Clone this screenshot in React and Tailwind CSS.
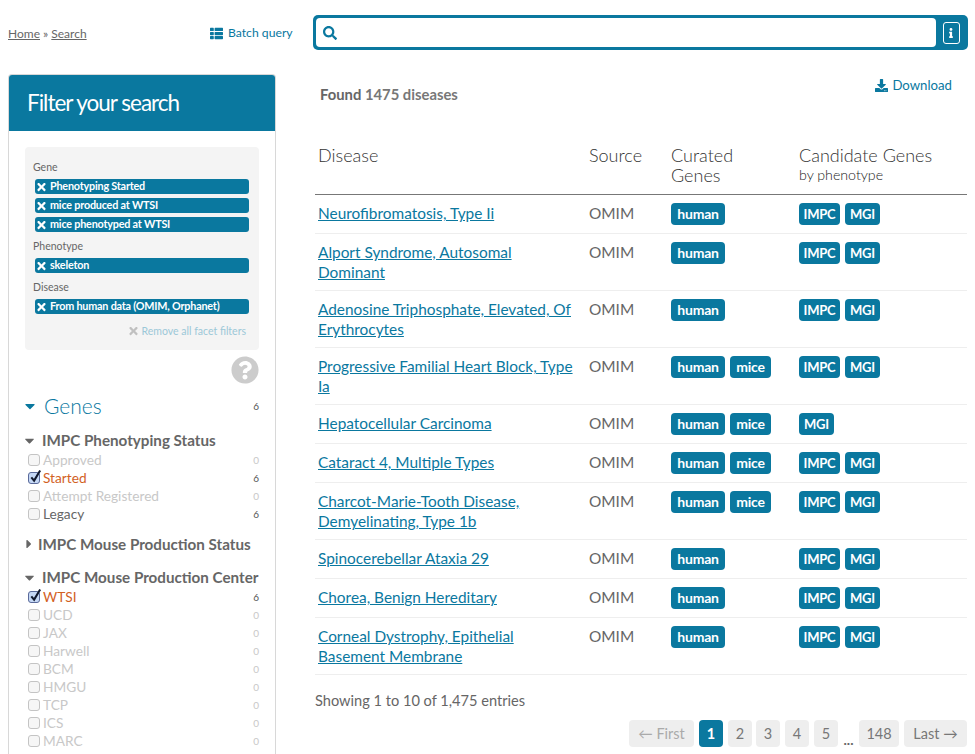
import { FaThList, FaSearch, FaInfo, FaDownload, FaTimes, FaQuestionCircle, FaCaretDown, FaCaretRight } from 'react-icons/fa';

const rows = [
  { name: ['Neurofibromatosis, Type Ii'], curated: ['human'], candidate: ['IMPC', 'MGI'] },
  { name: ['Alport Syndrome, Autosomal', 'Dominant'], curated: ['human'], candidate: ['IMPC', 'MGI'] },
  { name: ['Adenosine Triphosphate, Elevated, Of', 'Erythrocytes'], curated: ['human'], candidate: ['IMPC', 'MGI'] },
  { name: ['Progressive Familial Heart Block, Type', 'Ia'], curated: ['human', 'mice'], candidate: ['IMPC', 'MGI'] },
  { name: ['Hepatocellular Carcinoma'], curated: ['human', 'mice'], candidate: ['MGI'] },
  { name: ['Cataract 4, Multiple Types'], curated: ['human', 'mice'], candidate: ['IMPC', 'MGI'] },
  { name: ['Charcot-Marie-Tooth Disease,', 'Demyelinating, Type 1b'], curated: ['human', 'mice'], candidate: ['IMPC', 'MGI'] },
  { name: ['Spinocerebellar Ataxia 29'], curated: ['human'], candidate: ['IMPC', 'MGI'] },
  { name: ['Chorea, Benign Hereditary'], curated: ['human'], candidate: ['IMPC', 'MGI'] },
  { name: ['Corneal Dystrophy, Epithelial', 'Basement Membrane'], curated: ['human'], candidate: ['IMPC', 'MGI'] },
];

const badgeWidths = {
  human: 'w-[54px] text-[14px]',
  mice: 'w-[41px] text-[14px]',
  IMPC: 'w-[41px] text-[13px]',
  MGI: 'w-[35px] text-[13px]',
};

const Badge = ({ children }) => (
  <span className={`inline-flex h-[22px] items-center justify-center rounded-[4px] bg-[#0a789f] font-bold leading-none tracking-[-0.2px] text-white ${badgeWidths[children]}`}>
    {children}
  </span>
);

const Chip = ({ children }) => (
  <div className="flex h-[15px] items-center rounded-[3px] bg-[#0a789f] pl-[2px] text-[10.8px] font-bold leading-none tracking-[-0.2px] text-white">
    <FaTimes className="mr-[4px] h-[12px] w-[9px]" />
    {children}
  </div>
);

const Check = ({ checked }) => (
  <span className={`relative mr-[3px] block h-[12px] w-[12px] shrink-0 rounded-[3px] border ${checked ? 'border-[#5a6a9a] bg-[#c5d8f5]' : 'border-[#c4c4c4] bg-[#f6f6f6]'}`}>
    {checked && (
      <svg viewBox="0 0 14 16" className="absolute left-0 top-[-5px] h-[16px] w-[13px]">
        <path d="M2.5 9.5 L5.5 13 L12 2" fill="none" stroke="#10182c" strokeWidth="2.2" />
      </svg>
    )}
  </span>
);

const Facet = ({ label, count, checked }) => (
  <div className="flex h-[18px] items-center pl-[3px] text-[13.7px]">
    <Check checked={checked} />
    <span className={checked ? 'text-[#d2611f]' : count > 0 ? 'text-[#666666]' : 'text-[#c8c8c8]'}>{label}</span>
    <span className={`ml-auto text-[10px] ${count > 0 ? 'text-[#555555]' : 'text-[#c8c8c8]'}`}>{count}</span>
  </div>
);

const PageBtn = ({ children, className = 'w-[24px]' }) => (
  <span className={`flex h-[27px] items-center justify-center rounded-[4px] bg-[#eeeeee] text-[14.5px] text-[#777777] ${className}`}>
    {children}
  </span>
);

export default function App() {
  return (
    <div className="h-screen w-full overflow-hidden bg-white text-[#666666]" style={{ fontFamily: 'Lato, "Open Sans", sans-serif' }}>
      <div className="flex items-center pl-[8px] pr-[7px] pt-[15px]">
        <div className="w-[202px] pt-[2px] text-[12px] text-[#666666]">
          <a className="underline">Home</a> » <a className="underline">Search</a>
        </div>
        <div className="flex w-[103px] items-center pt-[2px] text-[12.2px] text-[#0a789f]">
          <FaThList className="mr-[5px] h-[13px] w-[13px]" />
          Batch query
        </div>
        <div className="flex h-[35px] flex-1 items-stretch rounded-[5px] bg-[#0a789f] p-[3px]">
          <div className="flex flex-1 items-center rounded-[4px] bg-white pl-[7px]">
            <FaSearch className="h-[14px] w-[14px] text-[#0a789f]" />
          </div>
          <div className="flex w-[29px] items-center justify-center pl-[1px]">
            <span className="flex h-[22px] w-[17px] items-center justify-center rounded-[3px] border border-white">
              <FaInfo className="h-[10px] w-[10px] text-white" />
            </span>
          </div>
        </div>
      </div>

      <div className="mt-[24px] flex">
        <aside className="ml-[8px] w-[268px] shrink-0 rounded-t-[4px] border-x border-t border-[#d8d8d8] pb-[40px]">
          <div className="flex h-[56px] items-center rounded-t-[3px] bg-[#0a789f] pl-[18px] text-[22.5px] tracking-[-1px] text-white">
            Filter your search
          </div>
          <div className="px-[16px] pt-[16px]">
            <div className="rounded-[4px] bg-[#f4f4f4] px-[10px] pb-[12px] pt-[13px]">
              <div className="-ml-[2px] mb-[5px] text-[10.5px] leading-[14px] text-[#666666]">Gene</div>
              <div className="flex flex-col gap-[4px]">
                <Chip>Phenotyping Started</Chip>
                <Chip>mice produced at WTSI</Chip>
                <Chip>mice phenotyped at WTSI</Chip>
              </div>
              <div className="-ml-[2px] mb-[5px] mt-[7px] text-[10.5px] leading-[14px] text-[#666666]">Phenotype</div>
              <Chip>skeleton</Chip>
              <div className="-ml-[2px] mb-[5px] mt-[7px] text-[10.5px] leading-[14px] text-[#666666]">Disease</div>
              <Chip>From human data (OMIM, Orphanet)</Chip>
              <div className="mt-[10px] flex items-center justify-end pr-[3px] text-[10.5px] leading-[14px] text-[#9cc8d8]">
                <FaTimes className="mr-[4px] h-[12px] w-[9px] text-[#c0c0c0]" />
                Remove all facet filters
              </div>
            </div>
            <div className="mt-[6px] flex justify-end">
              <FaQuestionCircle className="h-[28px] w-[28px] text-[#cccccc]" />
            </div>
            <div className="mt-[7px] flex h-[30px] items-center">
              <FaCaretDown className="ml-[-3px] h-[16px] w-[16px] text-[#0a789f]" />
              <span className="ml-[6px] text-[21px] font-light text-[#0a789f]">Genes</span>
              <span className="ml-auto text-[10px] text-[#555555]">6</span>
            </div>
            <div className="mt-[8px] flex h-[22px] items-center text-[15.2px] font-bold text-[#666666]">
              <FaCaretDown className="ml-[-3px] mr-[5px] h-[15px] w-[15px]" />
              IMPC Phenotyping Status
            </div>
            <Facet label="Approved" count={0} />
            <Facet label="Started" count={6} checked />
            <Facet label="Attempt Registered" count={0} />
            <Facet label="Legacy" count={6} />
            <div className="mt-[10px] flex h-[22px] items-center text-[15.2px] font-bold text-[#666666]">
              <FaCaretRight className="ml-[-3px] mr-[2px] h-[14px] w-[14px]" />
              IMPC Mouse Production Status
            </div>
            <div className="mt-[11px] flex h-[22px] items-center text-[15.2px] font-bold text-[#666666]">
              <FaCaretDown className="ml-[-3px] mr-[5px] h-[15px] w-[15px]" />
              IMPC Mouse Production Center
            </div>
            <Facet label="WTSI" count={6} checked />
            <Facet label="UCD" count={0} />
            <Facet label="JAX" count={0} />
            <Facet label="Harwell" count={0} />
            <Facet label="BCM" count={0} />
            <Facet label="HMGU" count={0} />
            <Facet label="TCP" count={0} />
            <Facet label="ICS" count={0} />
            <Facet label="MARC" count={0} />
          </div>
        </aside>

        <main className="ml-[39px] w-[652px] shrink-0">
          <div className="flex items-start justify-between">
            <div className="mt-[9px] pl-[5px] text-[14.8px] font-bold text-[#666666]">
              Found <span className="text-[#777777]">1475 diseases</span>
            </div>
            <div className="mt-[2px] flex items-center pr-[15px] text-[13.2px] text-[#0a789f]">
              <FaDownload className="mr-[4px] h-[13px] w-[13px]" />
              Download
            </div>
          </div>

          <table className="mt-[40px] w-full table-fixed border-collapse">
            <thead>
              <tr className="border-b border-[#777777] align-top text-left text-[18px] font-light leading-[20px] text-[#333333]">
                <th className="w-[274px] pb-[9px] pl-[3px] font-light">Disease</th>
                <th className="w-[82px] pb-[9px] font-light">Source</th>
                <th className="w-[128px] pb-[9px] font-light">Curated<br />Genes</th>
                <th className="pb-[9px] font-light">
                  Candidate Genes
                  <div className="text-[14.2px] font-light text-[#222222]">by phenotype</div>
                </th>
              </tr>
            </thead>
            <tbody>
              {rows.map((row) => (
                <tr key={row.name[0]} className="border-b border-[#eeeeee] align-top text-[15.4px] leading-[20px]">
                  <td className="py-[8px] pl-[3px] text-[#0a789f] underline">
                    {row.name.map((line) => <div key={line}>{line}</div>)}
                  </td>
                  <td className="py-[8px] text-[#666666]">OMIM</td>
                  <td className="py-[8px]">
                    <div className="flex gap-[5px]">
                      {row.curated.map((b) => <Badge key={b}>{b}</Badge>)}
                    </div>
                  </td>
                  <td className="py-[8px]">
                    <div className="flex gap-[5px]">
                      {row.candidate.map((b) => <Badge key={b}>{b}</Badge>)}
                    </div>
                  </td>
                </tr>
              ))}
            </tbody>
          </table>

          <div className="mt-[16px] text-[14.6px] leading-[20px] text-[#666666]">Showing 1 to 10 of 1,475 entries</div>

          <div className="mt-[9px] flex justify-end gap-[5px]">
            <PageBtn className="w-[65px] text-[#aaaaaa]">← First</PageBtn>
            <span className="flex h-[27px] w-[24px] items-center justify-center rounded-[4px] bg-[#0a789f] text-[14.5px] font-bold text-white">1</span>
            <PageBtn>2</PageBtn>
            <PageBtn className="-ml-[1px] w-[24px]">3</PageBtn>
            <PageBtn>4</PageBtn>
            <PageBtn>5</PageBtn>
            <span className="flex h-[27px] w-[11px] items-end justify-center text-[14px] font-bold leading-none text-[#666666]">...</span>
            <PageBtn className="w-[40px]">148</PageBtn>
            <PageBtn className="w-[63px]">Last →</PageBtn>
          </div>
        </main>
      </div>
    </div>
  );
}
